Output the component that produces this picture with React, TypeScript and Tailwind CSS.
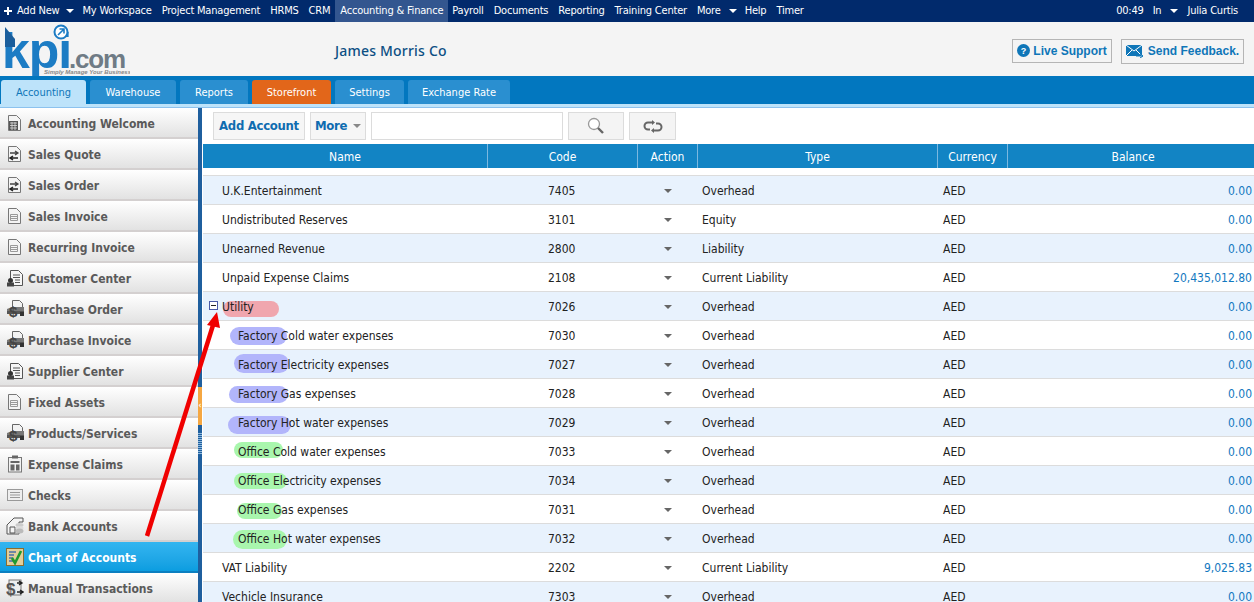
const topNav = ["My Workspace", "Project Management", "HRMS", "CRM"];
const topNavAfter = ["Payroll", "Documents", "Reporting", "Training Center"];

const tabs = [
  { label: "Accounting", cls: "w-[85px] bg-[#bde3fa] text-[#0f76b8]" },
  { label: "Warehouse", cls: "w-[86px] bg-[#2a8fd0] text-white" },
  { label: "Reports", cls: "w-[68px] bg-[#2a8fd0] text-white" },
  { label: "Storefront", cls: "w-[79px] bg-[#e2661a] text-white" },
  { label: "Settings", cls: "w-[69px] bg-[#2a8fd0] text-white" },
  { label: "Exchange Rate", cls: "w-[102px] bg-[#2a8fd0] text-white" },
];

type IconKind = "calc" | "swap" | "lines" | "person" | "money" | "clip" | "check" | "bank" | "chart" | "manual";

const sideItems: { label: string; icon: IconKind }[] = [
  { label: "Accounting Welcome", icon: "calc" },
  { label: "Sales Quote", icon: "swap" },
  { label: "Sales Order", icon: "swap" },
  { label: "Sales Invoice", icon: "lines" },
  { label: "Recurring Invoice", icon: "lines" },
  { label: "Customer Center", icon: "person" },
  { label: "Purchase Order", icon: "money" },
  { label: "Purchase Invoice", icon: "money" },
  { label: "Supplier Center", icon: "person" },
  { label: "Fixed Assets", icon: "lines" },
  { label: "Products/Services", icon: "money" },
  { label: "Expense Claims", icon: "clip" },
  { label: "Checks", icon: "check" },
  { label: "Bank Accounts", icon: "bank" },
  { label: "Chart of Accounts", icon: "chart" },
  { label: "Manual Transactions", icon: "manual" },
];

type Row = {
  name: string;
  code: string;
  type: string;
  balance: string;
  child?: boolean;
  toggle?: boolean;
  mark?: { left: number; top: number; width: number; height: number; color: string };
};

const blue = "bg-[#b2b5fb]";
const green = "bg-[#a9f6ad]";

const rows: Row[] = [
  { name: "U.K.Entertainment", code: "7405", type: "Overhead", balance: "0.00" },
  { name: "Undistributed Reserves", code: "3101", type: "Equity", balance: "0.00" },
  { name: "Unearned Revenue", code: "2800", type: "Liability", balance: "0.00" },
  { name: "Unpaid Expense Claims", code: "2108", type: "Current Liability", balance: "20,435,012.80" },
  { name: "Utility", code: "7026", type: "Overhead", balance: "0.00", toggle: true, mark: { left: 20, top: 9, width: 56, height: 16, color: "bg-[#f0a6ae]" } },
  { name: "Factory Cold water expenses", code: "7030", type: "Overhead", balance: "0.00", child: true, mark: { left: 27, top: 6, width: 57, height: 18, color: blue } },
  { name: "Factory Electricity expenses", code: "7027", type: "Overhead", balance: "0.00", child: true, mark: { left: 31, top: 4, width: 55, height: 19, color: blue } },
  { name: "Factory Gas expenses", code: "7028", type: "Overhead", balance: "0.00", child: true, mark: { left: 26, top: 7, width: 59, height: 17, color: blue } },
  { name: "Factory Hot water expenses", code: "7029", type: "Overhead", balance: "0.00", child: true, mark: { left: 25, top: 8, width: 63, height: 18, color: blue } },
  { name: "Office Cold water expenses", code: "7033", type: "Overhead", balance: "0.00", child: true, mark: { left: 31, top: 5, width: 49, height: 16, color: green } },
  { name: "Office Electricity expenses", code: "7034", type: "Overhead", balance: "0.00", child: true, mark: { left: 31, top: 7, width: 53, height: 16, color: green } },
  { name: "Office Gas expenses", code: "7031", type: "Overhead", balance: "0.00", child: true, mark: { left: 34, top: 8, width: 45, height: 16, color: green } },
  { name: "Office Hot water expenses", code: "7032", type: "Overhead", balance: "0.00", child: true, mark: { left: 30, top: 6, width: 54, height: 19, color: green } },
  { name: "VAT Liability", code: "2202", type: "Current Liability", balance: "9,025.83" },
  { name: "Vechicle Insurance", code: "7303", type: "Overhead", balance: "0.00" },
];

function Caret({ className }: { className: string }) {
  return (
    <svg width="8" height="4" viewBox="0 0 8 4" className={className}>
      <path d="M0 0h8L4 4z" fill="currentColor" />
    </svg>
  );
}

function Doc() {
  return <path d="M1.5 1.5h8l4 4v11h-12z" fill="#f4f4f4" stroke="#777" />;
}

function SideIcon({ kind }: { kind: IconKind }) {
  switch (kind) {
    case "calc":
      return (
        <svg width="16" height="18" viewBox="0 0 16 18">
          <Doc />
          <rect x="2" y="7" width="9" height="9" fill="#555" />
          <path d="M3 9h7M3 11.5h7M3 14h7M5 8v8M8 8v8" stroke="#ddd" strokeWidth="0.8" />
        </svg>
      );
    case "swap":
      return (
        <svg width="16" height="18" viewBox="0 0 16 18">
          <Doc />
          <path d="M3 8h7M8 6l3 2-3 2" fill="none" stroke="#444" strokeWidth="1.3" />
          <path d="M11 13H4M6 11l-3 2 3 2" fill="none" stroke="#222" strokeWidth="1.5" />
        </svg>
      );
    case "lines":
      return (
        <svg width="16" height="18" viewBox="0 0 16 18">
          <Doc />
          <path d="M3.5 7.5h7v6h-7zM3.5 9.5h7M3.5 11.5h7" fill="none" stroke="#999" />
        </svg>
      );
    case "person":
      return (
        <svg width="18" height="18" viewBox="0 0 18 18">
          <path d="M4.5 1.5h8l4 4v11h-12z" fill="#f6f6f6" stroke="#555" />
          <path d="M7 6h7M7 8.5h7M9 11h5M9 13.5h5" stroke="#555" />
          <circle cx="4.5" cy="11.5" r="2.5" fill="#333" />
          <rect x="1" y="13.5" width="7" height="4" fill="#444" />
        </svg>
      );
    case "money":
      return (
        <svg width="19" height="18" viewBox="0 0 19 18">
          <path d="M6.5 0.5h7l3 3v6h-10z" fill="#f2f2f2" stroke="#666" />
          <path d="M1 9l5-2h12v5H1z" fill="#777" />
          <path d="M1 11h17v3H1z" fill="#555" />
          <rect x="14" y="12" width="4" height="4" fill="#333" />
          <text x="3" y="17" fontSize="15" fontWeight="700" fill="#444" fontFamily="Liberation Sans, sans-serif">$</text>
        </svg>
      );
    case "clip":
      return (
        <svg width="15" height="18" viewBox="0 0 15 18">
          <rect x="0.5" y="2.5" width="13" height="14.5" fill="#f2f2f2" stroke="#777" />
          <rect x="4" y="0.5" width="6" height="3" fill="#666" />
          <path d="M2.5 6h9v2h-9zM2.5 9.5h4v6h-4zM8 9.5h3.5v6H8z" fill="#666" />
        </svg>
      );
    case "check":
      return (
        <svg width="16" height="12" viewBox="0 0 16 12">
          <rect x="0.5" y="0.5" width="15" height="11" fill="#eee" stroke="#999" />
          <path d="M3 3.5h10M3 6h10M3 8.5h10" stroke="#999" />
        </svg>
      );
    case "bank":
      return (
        <svg width="18" height="18" viewBox="0 0 18 18">
          <path d="M1 8l7-7h9v4H13v12H1z" fill="#f4f4f4" stroke="#555" />
          <path d="M4 10h5v6H4z" fill="none" stroke="#555" />
          <ellipse cx="13.5" cy="8" rx="4" ry="2" fill="#ccc" />
          <ellipse cx="13.5" cy="11" rx="4" ry="2" fill="#ddd" />
          <ellipse cx="13.5" cy="14" rx="4" ry="2.5" fill="#bbb" />
        </svg>
      );
    case "chart":
      return (
        <svg width="18" height="18" viewBox="0 0 18 18">
          <rect x="0.5" y="0.5" width="17" height="17" fill="#e2cf9a" stroke="#8a6d2f" />
          <path d="M3 4h7M3 7h5M3 10h4M3 13h4" stroke="#4b6fa8" strokeWidth="1.4" />
          <path d="M6 10l3 5 6-12" fill="none" stroke="#1f9a2e" strokeWidth="2.6" />
        </svg>
      );
    case "manual":
      return (
        <svg width="18" height="18" viewBox="0 0 18 18">
          <rect x="3" y="1" width="12" height="15" fill="#eee" stroke="#777" />
          <text x="0" y="16" fontSize="17" fontWeight="700" fill="#555" fontFamily="Liberation Sans, sans-serif">$</text>
          <path d="M11 4h4M13 2l3 2-3 2M11 13h5M14 11l3 2-3 2" fill="none" stroke="#222" strokeWidth="1.4" />
        </svg>
      );
  }
}

export default function App() {
  return (
    <div className="relative h-[602px] overflow-hidden bg-white font-['DejaVu_Sans_Condensed','Noto_Sans',sans-serif] text-[12px] text-[#222]">
      <div className="flex h-[22px] items-center bg-[#012a6c] text-[11px] tracking-[-0.2px] text-white">
        <svg width="8" height="8" viewBox="0 0 8 8" className="ml-[4px] mr-[4px]">
          <path d="M3 0h2v3h3v2H5v3H3V5H0V3h3z" fill="#fff" />
        </svg>
        <span className="ml-px">Add New</span>
        <Caret className="ml-[7px] mr-[8px] text-white" />
        <div className="flex gap-[10px]">
          {topNav.map((item) => (
            <span key={item}>{item}</span>
          ))}
        </div>
        <span className="ml-[5px] flex h-full w-[113px] items-center justify-center bg-[#33568f]">Accounting & Finance</span>
        <div className="ml-1 flex gap-[10px]">
          {topNavAfter.map((item) => (
            <span key={item}>{item}</span>
          ))}
        </div>
        <span className="ml-[10px]">More</span>
        <Caret className="ml-2 mr-2 text-white" />
        <span className="mr-[10px]">Help</span>
        <span>Timer</span>
        <div className="ml-auto flex items-center pr-[16px]">
          <span>00:49</span>
          <span className="ml-[9px]">In</span>
          <Caret className="ml-[9px] mr-[9px] text-white" />
          <span>Julia Curtis</span>
        </div>
      </div>

      <div className="flex h-[54px] items-center bg-[#f4f4f4]">
        <div className="relative ml-[5px] h-[54px] w-[125px] shrink-0 overflow-hidden">
          <span className="absolute left-[-3px] top-[-1px] font-['Liberation_Sans',sans-serif] text-[50px] font-bold leading-[60px] tracking-[-1px] text-[#1c7cc4]">
            kpi
          </span>
          <svg width="10" height="20" viewBox="0 0 10 20" className="absolute left-0 top-[5px]">
            <path d="M0 0L10 12V20H0z" fill="#1b5e9c" />
          </svg>
          <span className="absolute left-[64px] top-[20px] font-['Liberation_Sans',sans-serif] text-[26px] font-bold leading-[34px] tracking-[-1.2px] text-[#6f7b85]">
            .com
          </span>
          <svg width="16" height="16" viewBox="0 0 16 16" className="absolute left-[48px] top-[2px]">
            <circle cx="8" cy="8" r="6.5" fill="#fff" stroke="#1c7cc4" strokeWidth="2" />
            <path d="M5 11l6-6M6.5 5H11v4.5" fill="none" stroke="#1c7cc4" strokeWidth="1.6" />
          </svg>
          <span className="absolute left-[39px] top-[47px] whitespace-nowrap font-['Liberation_Sans',sans-serif] text-[6px] font-bold italic leading-none text-[#888]">
            Simply Manage Your Business
          </span>
        </div>
        <span className="ml-[205px] mt-[2px] font-['Noto_Sans',sans-serif] text-[14px] font-medium tracking-[0.2px] text-[#0c4f83]">James Morris Co</span>
        <div className="ml-auto flex gap-[9px] pr-[10px] pt-1 font-['Liberation_Sans',sans-serif]">
          <button className="flex h-[24px] w-[100px] items-center justify-center gap-[3px] border border-[#b5b5b5] text-[12px] font-bold text-[#0f76b8]">
            <svg width="13" height="13" viewBox="0 0 13 13">
              <circle cx="6.5" cy="6.5" r="6.5" fill="#0f76b8" />
              <text x="6.5" y="10" textAnchor="middle" fontSize="9" fontWeight="700" fill="#fff" fontFamily="Liberation Sans, sans-serif">?</text>
            </svg>
            Live Support
          </button>
          <button className="flex h-[25px] w-[123px] items-center justify-center gap-1 border border-[#b5b5b5] text-[12px] font-bold text-[#0f76b8]">
            <svg width="18" height="13" viewBox="0 0 18 13">
              <path d="M0 0h16v11H0z" fill="#0f76b8" />
              <path d="M0 0l8 6 8-6M0 11l6-6M16 11l-6-6" fill="none" stroke="#fff" />
              <path d="M10 11h7M14 9l3 2-3 2" fill="none" stroke="#0f76b8" />
            </svg>
            Send Feedback.
          </button>
        </div>
      </div>

      <div className="flex h-[28px] items-end gap-1 bg-[#0277bf] pl-[1px]">
        {tabs.map((tab) => (
          <div key={tab.label} className={`flex h-[24px] items-center justify-center rounded-t-[3px] pt-[2px] text-[11px] ${tab.cls}`}>
            {tab.label}
          </div>
        ))}
      </div>
      <div className="h-[4px] border-b border-[#8cc2ee] bg-[#bde3fa]" />

      <div className="flex">
        <div className="w-[198px] shrink-0">
          {sideItems.map(({ label, icon }) => {
            const active = label === "Chart of Accounts";
            return (
              <div
                key={label}
                className={`flex h-[31px] items-center border-b-2 text-[12px] font-bold ${
                  active
                    ? "border-[#0b7fc0] bg-gradient-to-b from-[#33b5f0] to-[#0a9de0] text-white"
                    : "border-[#d4d0d0] bg-gradient-to-b from-white to-[#e2e2e2] text-[#5a5a5a]"
                }`}
              >
                <span className="flex w-[28px] shrink-0 justify-center pl-[2px]">
                  <SideIcon kind={icon} />
                </span>
                <span className="whitespace-nowrap pt-[2px]">{label}</span>
              </div>
            );
          })}
        </div>

        <div className="flex w-[4px] shrink-0 flex-col bg-[#1f5f9e]">
          <div className="mt-[279px] flex h-[38px] items-center justify-center bg-[#f5a742] text-[8px] font-bold leading-none text-white">
            ‹
          </div>
          <div className="mt-[8px] h-[22px] bg-[repeating-linear-gradient(to_bottom,#8fb8dc_0,#8fb8dc_1px,#1f5f9e_1px,#1f5f9e_2px)]" />
        </div>

        <div className="min-w-0 flex-1 pl-px">
          <div className="flex h-[36px] items-center gap-[5px] pl-[10px]">
            <button className="h-[28px] w-[92px] whitespace-nowrap border border-[#dcdcdc] bg-[#f6f6f6] text-[13px] font-bold tracking-[-0.3px] text-[#0f6cb0]">
              Add Account
            </button>
            <button className="flex h-[28px] w-[56px] items-center justify-center gap-[6px] border border-[#dcdcdc] bg-[#f6f6f6] text-[13px] font-bold tracking-[-0.3px] text-[#0f6cb0]">
              More
              <Caret className="text-[#888]" />
            </button>
            <div className="h-[28px] w-[192px] border border-[#dcdcdc] bg-white" />
            <button className="flex h-[28px] w-[56px] items-center justify-center border border-[#dcdcdc] bg-[#f4f4f4]">
              <svg width="18" height="18" viewBox="0 0 18 18">
                <circle cx="7" cy="7" r="5.5" fill="#fff" stroke="#999" strokeWidth="1.3" />
                <path d="M11 11l5 5" stroke="#666" strokeWidth="2.4" />
              </svg>
            </button>
            <button className="flex h-[28px] w-[47px] items-center justify-center border border-[#dcdcdc] bg-[#f4f4f4]">
              <svg width="20" height="13" viewBox="0 0 20 13">
                <path d="M10 2.5H5a3.5 3.5 0 0 0 0 7h2M10 10.5h5a3.5 3.5 0 0 0 0-7h-2" fill="none" stroke="#666" strokeWidth="2" />
                <path d="M9 0l3 2.5L9 5zM11 8l-3 2.5 3 2.5z" fill="#666" />
              </svg>
            </button>
          </div>

          <div className="grid h-[24px] grid-cols-[285px_150px_60px_240px_70px_1fr] items-stretch bg-[#1284c4] text-center text-[12px] text-white">
            {["Name", "Code", "Action", "Type", "Currency", "Balance"].map((h, i) => (
              <div key={h} className={`flex items-center justify-center pt-px ${i < 5 ? "border-r border-[#7cb8e0]" : "pl-[4px]"}`}>
                {h}
              </div>
            ))}
          </div>
          <div className="h-[8px] border-b border-[#dcdcdc]" />

          {rows.map((row, i) => (
            <div
              key={row.code}
              className={`grid h-[29px] grid-cols-[285px_150px_60px_240px_70px_1fr] items-center border-b border-[#dcdcdc] pt-px ${
                i % 2 === 0 ? "bg-[#e8f2fd]" : "bg-white"
              }`}
            >
              <div className={`relative flex h-full items-center ${row.child ? "pl-[35px]" : "pl-[19px]"}`}>
                {row.toggle && (
                  <span className="absolute left-[6px] top-[8px] flex h-[9px] w-[9px] items-center justify-center border border-[#4a5aa8] bg-white">
                    <span className="h-px w-[5px] bg-[#222]" />
                  </span>
                )}
                {row.mark && (
                  <span
                    className={`absolute rounded-full ${row.mark.color}`}
                    style={{ left: row.mark.left, top: row.mark.top - 1, width: row.mark.width, height: row.mark.height }}
                  />
                )}
                <span className="relative whitespace-nowrap">{row.name}</span>
              </div>
              <div className="pl-[60px]">{row.code}</div>
              <div className="flex justify-center">
                <Caret className="text-[#666]" />
              </div>
              <div className="pl-[4px]">{row.type}</div>
              <div className="pl-[5px]">AED</div>
              <div className="pr-[2px] text-right text-[#1278c0]">{row.balance}</div>
            </div>
          ))}
        </div>
      </div>

      <svg width="1254" height="602" viewBox="0 0 1254 602" className="pointer-events-none absolute left-0 top-0">
        <path d="M147 536L214 322" stroke="#f00000" strokeWidth="4.5" />
        <path d="M217 312L207 325L220 328z" fill="#f00000" />
      </svg>
    </div>
  );
}
